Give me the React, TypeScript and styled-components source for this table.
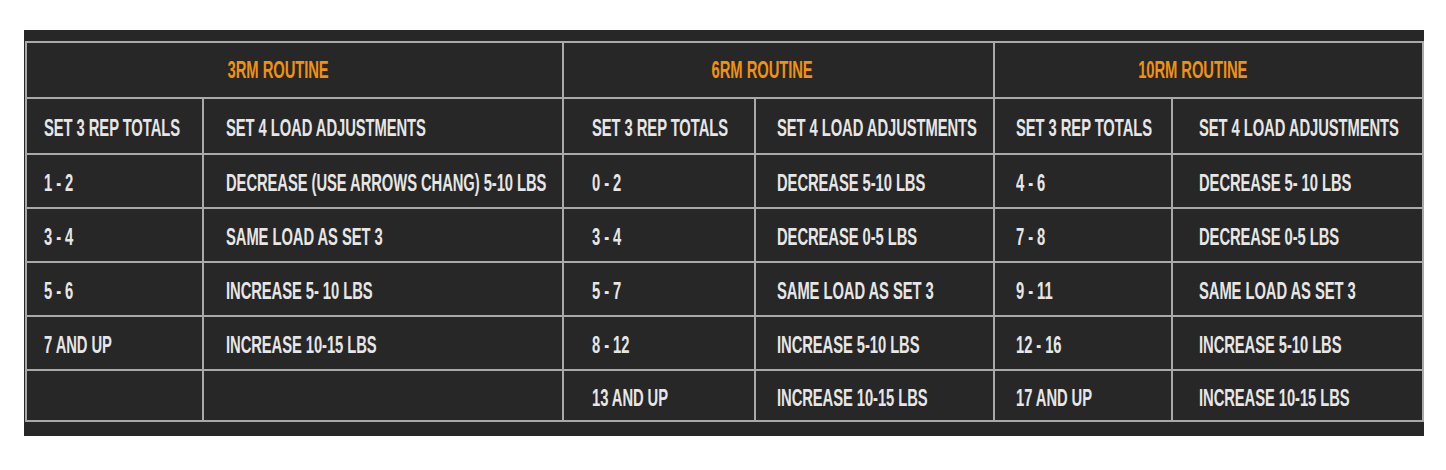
import React from "react";
import styled, { createGlobalStyle } from "styled-components";

// Data --------------------------------------------------------------------------

interface Column {
  width: number;
  pad: number;
}

const columns: Column[] = [
  { width: 177, pad: 17 },
  { width: 360, pad: 22 },
  { width: 192, pad: 28 },
  { width: 239, pad: 21 },
  { width: 178, pad: 21 },
  { width: 251, pad: 26 },
];

const routines = ["3RM ROUTINE", "6RM ROUTINE", "10RM ROUTINE"];

const rows: string[][] = [
  ["1 - 2", "DECREASE (USE ARROWS CHANG) 5-10 LBS", "0 - 2", "DECREASE 5-10 LBS", "4 - 6", "DECREASE 5- 10 LBS"],
  ["3 - 4", "SAME LOAD AS SET 3", "3 - 4", "DECREASE 0-5 LBS", "7 - 8", "DECREASE 0-5 LBS"],
  ["5 - 6", "INCREASE 5- 10 LBS", "5 - 7", "SAME LOAD AS SET 3", "9 - 11", "SAME LOAD AS SET 3"],
  ["7 AND UP", "INCREASE 10-15 LBS", "8 - 12", "INCREASE 5-10 LBS", "12 - 16", "INCREASE 5-10 LBS"],
  ["", "", "13 AND UP", "INCREASE 10-15 LBS", "17 AND UP", "INCREASE 10-15 LBS"],
];

// Component ---------------------------------------------------------------------

const App: React.FC = () => {
  return (
    <>
      <GlobalStyle />
      <Panel>
        <Table>
          <colgroup>
            {columns.map((c, i) => (
              <col key={i} style={{ width: c.width }} />
            ))}
          </colgroup>
          <thead>
            <HeadRow>
              {routines.map((r) => (
                <GroupHead key={r} colSpan={2}>
                  <Condensed $center>{r}</Condensed>
                </GroupHead>
              ))}
            </HeadRow>
            <HeadRow>
              {columns.map((c, i) => (
                <Cell key={i} $pad={c.pad}>
                  <Condensed>
                    {i % 2 === 0 ? "SET 3 REP TOTALS" : "SET 4 LOAD ADJUSTMENTS"}
                  </Condensed>
                </Cell>
              ))}
            </HeadRow>
          </thead>
          <tbody>
            {rows.map((row, r) => (
              <Row key={r} $last={r === rows.length - 1}>
                {row.map((text, i) => (
                  <Cell key={i} $pad={columns[i].pad}>
                    <Condensed>{text}</Condensed>
                  </Cell>
                ))}
              </Row>
            ))}
          </tbody>
        </Table>
      </Panel>
    </>
  );
};

export default App;

// Styled ------------------------------------------------------------------------

const GlobalStyle = createGlobalStyle`
  body {
    margin: 0;
    background: #ffffff;
    font-family: "Liberation Sans", Arial, sans-serif;
  }
`;

const Panel = styled.div`
  margin: 30px 0 0 24px;
  width: 1400px;
  background: #272727;
  padding: 11px 2px 14px 1px;
  box-sizing: border-box;
`;

const Table = styled.table`
  width: 1397px;
  table-layout: fixed;
  border-collapse: collapse;
  border: 2px solid #a9a9a9;
`;

const HeadRow = styled.tr`
  height: 56px;
`;

const GroupHead = styled.th`
  padding: 0 32px 0 0;
  border: 2px solid #a9a9a9;
  text-align: center;
  vertical-align: middle;
  color: #f0920c;
  overflow: hidden;
`;

const Row = styled.tr<{ $last?: boolean }>`
  height: ${(p) => (p.$last ? 51 : 54)}px;
`;

const Cell = styled.td<{ $pad: number }>`
  padding: 4px 0 0 ${(p) => p.$pad}px;
  border: 2px solid #a9a9a9;
  vertical-align: middle;
  color: #e6e6e6;
  white-space: nowrap;
  overflow: hidden;
`;

const Condensed = styled.span<{ $center?: boolean }>`
  display: inline-block;
  font-family: "Liberation Sans", Arial, sans-serif;
  font-weight: 700;
  font-size: 24px;
  line-height: 24px;
  letter-spacing: -0.1px;
  transform: scaleX(0.615);
  transform-origin: ${(p) => (p.$center ? "center" : "left")} center;
`;
